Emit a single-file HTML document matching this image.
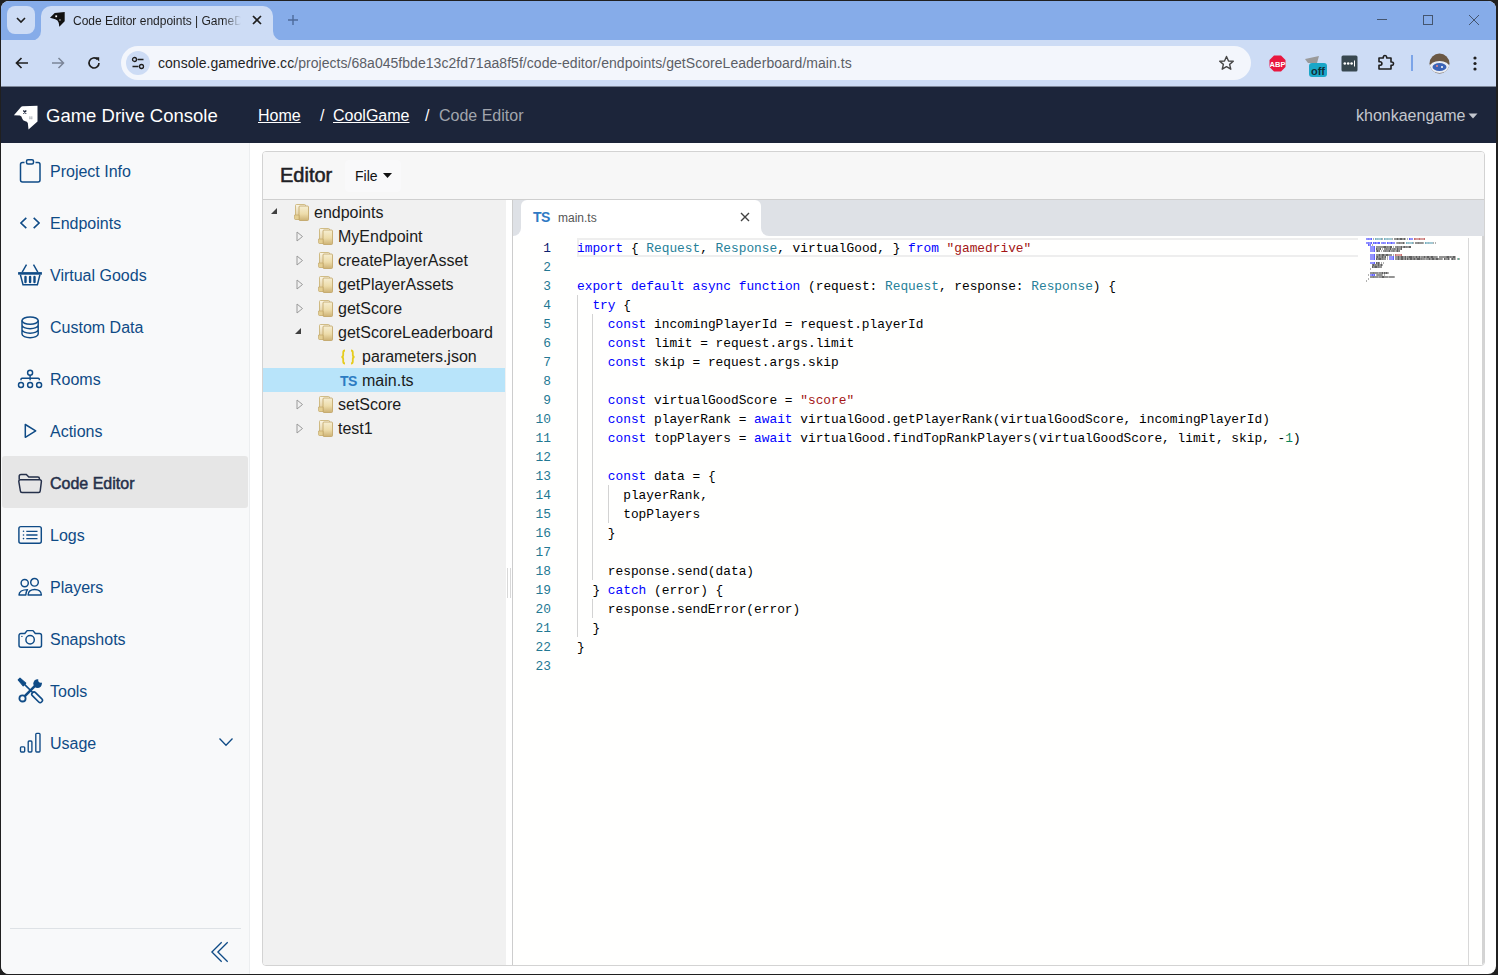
<!DOCTYPE html>
<html><head><meta charset="utf-8">
<style>
*{box-sizing:border-box;margin:0;padding:0}
html,body{width:1498px;height:975px;overflow:hidden;background:#202020;font-family:"Liberation Sans",sans-serif}
.abs{position:absolute}
#win{position:absolute;left:1px;top:1px;width:1495px;height:973px;background:#fff;border-radius:8px;overflow:hidden}
#root{position:absolute;left:-1px;top:-1px;width:1498px;height:975px}
/* chrome */
#tabstrip{position:absolute;left:0;top:0;width:1498px;height:40px;background:#86ace9}
#toolbar{position:absolute;left:0;top:40px;width:1498px;height:47px;background:#cddcf5;border-bottom:1px solid #7d8799}
#tabdd{position:absolute;left:7px;top:6px;width:28px;height:28px;border-radius:8px;background:#cddcf5}
#acttab{position:absolute;left:41px;top:6px;width:232px;height:35px;background:#cddcf5;border-radius:10px 10px 0 0}
#acttab:before,#acttab:after{content:"";position:absolute;bottom:0;width:10px;height:10px;background:transparent}
#acttab:before{left:-10px;border-bottom-right-radius:10px;box-shadow:4px 4px 0 4px #cddcf5}
#acttab:after{right:-10px;border-bottom-left-radius:10px;box-shadow:-4px 4px 0 4px #cddcf5}
#tabtitle{position:absolute;left:32px;top:8px;font-size:12px;color:#1f1f1f;white-space:nowrap;width:170px;overflow:hidden;
  -webkit-mask-image:linear-gradient(90deg,#000 150px,transparent 168px)}
#omni{position:absolute;left:121px;top:6px;width:1130px;height:34px;border-radius:17px;background:#f3f6fc}
#siteic{position:absolute;left:5px;top:5px;width:24px;height:24px;border-radius:12px;background:#cddcf5}
#url{position:absolute;left:37px;top:9px;font-size:14px;letter-spacing:0.04px;color:#5b5e66;white-space:nowrap}
#url b{font-weight:normal;color:#1f1f1f}
/* app nav */
#nav{position:absolute;left:0;top:87px;width:1498px;height:56px;background:#1c253a}
#brand{position:absolute;left:46px;top:18px;font-size:18.5px;color:#fff;white-space:nowrap}
.bc{position:absolute;top:20px;font-size:16px;color:#fff;white-space:nowrap}
.bc u{text-decoration:underline;text-underline-offset:1px}
#user{position:absolute;left:1356px;top:20px;font-size:16px;color:#c3c7ce;white-space:nowrap}
/* sidebar */
#side{position:absolute;left:0;top:143px;width:250px;height:832px;background:#f8f9fa;border-right:1px solid #eceef0}
.si{position:absolute;left:2px;width:246px;height:52px;border-radius:3px}
.si.act{background:#e6e6e6}
.si span{position:absolute;left:48px;top:18.5px;font-size:16px;color:#0f4b86;white-space:nowrap}
.si.act span{color:#25304a;-webkit-text-stroke:0.5px #25304a}
.si svg{position:absolute;left:14px;top:12px}
#sidesep{position:absolute;left:10px;top:785px;width:231px;height:1px;background:#dee2e6}
/* card */
#card{position:absolute;left:262px;top:151px;width:1223px;height:815px;border:1px solid #d3d3d3;border-radius:4px;background:#fff;overflow:hidden}
#chead{position:absolute;left:0;top:0;width:1221px;height:48px;background:#f7f7f7;border-bottom:1px solid #cfcfcf}
#ctitle{position:absolute;left:17px;top:12px;font-size:20px;font-weight:normal;color:#1e2125;-webkit-text-stroke:0.55px #1e2125}
#filebtn{position:absolute;left:82px;top:8px;width:56px;height:32px;border-radius:4px;background:#f9f9fa}
#filebtn span{position:absolute;left:10px;top:8px;font-size:14px;color:#111}
#tree{position:absolute;left:0;top:48px;width:243px;height:765px;background:#f1f1f1}
.tr{position:absolute;left:0;width:242px;height:24px}
.tr span{position:absolute;top:4px;font-size:16px;color:#1b1b1b;white-space:nowrap}
.tr.sel{background:#b8e4fa}
.tr svg{position:absolute}
#split{position:absolute;left:243px;top:48px;width:6px;height:765px;background:#fff}
#editor{position:absolute;left:249px;top:48px;width:972px;height:765px;background:#fffffe;border-left:1px solid #cdcdcd}
#etabs{position:absolute;left:0;top:0;width:971px;height:36px;background:#dee1e6}
#etab{position:absolute;left:8px;top:0;width:240px;height:36px;background:#fff;border-radius:6px 6px 0 0}
#etab:before,#etab:after{content:"";position:absolute;bottom:0;width:8px;height:8px;background:transparent}
#etab:before{left:-8px;border-bottom-right-radius:8px;box-shadow:3px 3px 0 3px #fff}
#etab:after{right:-8px;border-bottom-left-radius:8px;box-shadow:-3px 3px 0 3px #fff}
.code{font-family:"Liberation Mono",monospace;font-size:12.84px;line-height:19px;white-space:pre}
.ln{position:absolute;left:0;height:19px;color:#000}
.nm{position:absolute;right:0;height:19px;color:#237893;text-align:right}
b.kw{font-weight:normal;color:#0000ff}
b.ty{font-weight:normal;color:#267f99}
b.str{font-weight:normal;color:#a31515}
b.num{font-weight:normal;color:#098658}
</style></head><body>
<div id="win"><div id="root">
 <div id="tabstrip">
  <div id="tabdd"><svg class="abs" style="left:8px;top:10px" width="12" height="8" viewBox="0 0 12 8"><path d="M2 2 L6 6 L10 2" fill="none" stroke="#1f1f1f" stroke-width="1.6"/></svg></div>
  <div id="acttab">
   <svg class="abs" style="left:8px;top:5px" width="18" height="18" viewBox="0 0 18 18"><path d="M1 6.7 L5.7 2 L15.7 1 V10.3 L10.3 15.7 L9.7 11.7 Q9 9 6.3 8.3 Z" fill="#111"/><rect x="6.3" y="4.4" width="1.8" height="1.8" fill="#fff"/><rect x="10" y="8" width="1.9" height="1.9" fill="#6a6a6a"/></svg>
   <div id="tabtitle">Code Editor endpoints | GameDrive</div>
   <svg class="abs" style="left:211px;top:9px" width="10" height="10" viewBox="0 0 10 10"><path d="M1 1 L9 9 M9 1 L1 9" stroke="#1f1f1f" stroke-width="1.7"/></svg>
  </div>
  <svg class="abs" style="left:287px;top:14px" width="12" height="12" viewBox="0 0 12 12"><path d="M6 1 V11 M1 6 H11" stroke="#4d6a9a" stroke-width="1.4"/></svg>
  <svg class="abs" style="left:1376px;top:14px" width="12" height="12" viewBox="0 0 12 12"><path d="M1 5.5 H11" stroke="#44556f" stroke-width="1"/></svg>
  <svg class="abs" style="left:1422px;top:14px" width="12" height="12" viewBox="0 0 12 12"><rect x="1.5" y="1.5" width="9" height="9" fill="none" stroke="#44556f" stroke-width="1"/></svg>
  <svg class="abs" style="left:1468px;top:14px" width="12" height="12" viewBox="0 0 12 12"><path d="M1 1 L11 11 M11 1 L1 11" stroke="#44556f" stroke-width="1"/></svg>
 </div>
 <div id="toolbar">
  <svg class="abs" style="left:14px;top:15px" width="16" height="16" viewBox="0 0 16 16"><path d="M14 8 H2.5 M7.5 3 L2.5 8 L7.5 13" fill="none" stroke="#1f1f1f" stroke-width="1.7"/></svg>
  <svg class="abs" style="left:50px;top:15px" width="16" height="16" viewBox="0 0 16 16"><path d="M2 8 H13.5 M8.5 3 L13.5 8 L8.5 13" fill="none" stroke="#7b8598" stroke-width="1.5"/></svg>
  <svg class="abs" style="left:86px;top:15px" width="16" height="16" viewBox="0 0 16 16"><path d="M13 8 A5 5 0 1 1 11.4 4.3" fill="none" stroke="#1f1f1f" stroke-width="1.7"/><path d="M9 2.2 H13.2 V6.4 Z" fill="#1f1f1f"/></svg>
  <div id="omni">
   <div id="siteic"><svg class="abs" style="left:5px;top:5px" width="14" height="14" viewBox="0 0 14 14"><circle cx="3.5" cy="3.5" r="2" fill="none" stroke="#1f1f1f" stroke-width="1.3"/><path d="M6.5 3.5 H12.5 M1.5 10.5 H7.5" stroke="#1f1f1f" stroke-width="1.3"/><circle cx="10.5" cy="10.5" r="2" fill="none" stroke="#1f1f1f" stroke-width="1.3"/></svg></div>
   <div id="url"><b>console.gamedrive.cc</b>/projects/68a045fbde13c2fd71aa8f5f/code-editor/endpoints/getScoreLeaderboard/main.ts</div>
   <svg class="abs" style="left:1097px;top:9px" width="17" height="16" viewBox="0 0 17 16"><path d="M8.5 1.5 L10.5 6 L15.3 6.3 L11.6 9.4 L12.8 14.2 L8.5 11.6 L4.2 14.2 L5.4 9.4 L1.7 6.3 L6.5 6 Z" fill="none" stroke="#474747" stroke-width="1.4" stroke-linejoin="round"/></svg>
  </div>
  <svg class="abs" style="left:1269px;top:15px" width="17" height="17" viewBox="0 0 17 17"><path d="M5 0.5 H12 L16.5 5 V12 L12 16.5 H5 L0.5 12 V5 Z" fill="#e8173f"/><text x="8.5" y="11.6" font-size="7.5" font-weight="bold" fill="#fff" text-anchor="middle" font-family="Liberation Sans">ABP</text></svg>
  <svg class="abs" style="left:1304px;top:15px" width="24" height="23" viewBox="0 0 24 23"><path d="M1 4 L15 1 L13 8 L4 8 Z" fill="#9a9a9a"/><rect x="5" y="8" width="18" height="14" rx="3" fill="#1ba7c8"/><text x="14" y="19.5" font-size="11" font-weight="bold" fill="#10303a" text-anchor="middle" font-family="Liberation Sans">off</text></svg>
  <svg class="abs" style="left:1341px;top:15px" width="17" height="17" viewBox="0 0 17 17"><rect x="0.5" y="0.5" width="16" height="16" rx="1.5" fill="#37474f"/><circle cx="3.8" cy="8.5" r="1.3" fill="#fff"/><circle cx="7.2" cy="8.5" r="1.3" fill="#fff"/><circle cx="10.6" cy="8.5" r="1.3" fill="#fff"/><rect x="13" y="5.5" width="1" height="6" fill="#fff"/></svg>
  <svg class="abs" style="left:1377px;top:14px" width="18" height="17" viewBox="0 0 18 17"><path d="M2 4 H6.3 V3.2 A1.7 1.7 0 0 1 9.7 3.2 V4 H14 V8 H14.8 A1.7 1.7 0 0 1 14.8 11.4 H14 V15 H2 V11.2 H3.2 A1.7 1.7 0 0 0 3.2 7.8 H2 Z" fill="none" stroke="#1f1f1f" stroke-width="1.6" stroke-linejoin="round"/></svg>
  <div class="abs" style="left:1411px;top:15px;width:2px;height:16px;background:#7ba4e8"></div>
  <svg class="abs" style="left:1429px;top:13px" width="21" height="21" viewBox="0 0 21 21"><defs><clipPath id="av"><circle cx="10.5" cy="10.5" r="10"/></clipPath></defs><g clip-path="url(#av)"><rect width="21" height="21" fill="#6a5845"/><ellipse cx="10.5" cy="14" rx="10" ry="6" fill="#e8ecf4"/><ellipse cx="10.5" cy="14" rx="7" ry="4" fill="#3b63b6"/><circle cx="8" cy="13" r="1" fill="#e88"/><circle cx="13" cy="14" r="1" fill="#fff"/></g></svg>
  <svg class="abs" style="left:1472px;top:15px" width="6" height="17" viewBox="0 0 6 17"><circle cx="3" cy="3" r="1.6" fill="#1f1f1f"/><circle cx="3" cy="8.5" r="1.6" fill="#1f1f1f"/><circle cx="3" cy="14" r="1.6" fill="#1f1f1f"/></svg>
 </div>
 <div id="nav">
  <svg class="abs" style="left:12px;top:17px" width="28" height="28" viewBox="0 0 28 28"><path d="M1.9 11.3 L8.8 3.2 Q9.5 2.3 10.7 2.3 L25.5 1.7 V17.4 L16.5 25.5 L15.8 19 Q15 17.2 13.4 17.2 Q10.6 16.8 10.2 14.5 Q9.8 11.9 7.8 11.6 Z" fill="#fff"/><path d="M11.3 6.5 L14.3 9.5 M14.3 6.5 L11.3 9.5" stroke="#1c253a" stroke-width="1.4"/><path d="M17.8 12.2 V15.4 M19.8 12.2 V15.4 M17.2 13.2 H20.4 M17.2 14.6 H20.4" stroke="#9aa0aa" stroke-width="0.5"/></svg>
  <div id="brand">Game Drive Console</div>
  <div class="bc" style="left:258px"><u>Home</u></div>
  <div class="bc" style="left:320px">/</div>
  <div class="bc" style="left:333px"><u>CoolGame</u></div>
  <div class="bc" style="left:425px">/</div>
  <div class="bc" style="left:439px;color:#a1a5ad">Code Editor</div>
  <div id="user">khonkaengame</div>
  <svg class="abs" style="left:1468px;top:26px" width="10" height="6" viewBox="0 0 10 6"><path d="M0.5 0.5 H9.5 L5 5.5 Z" fill="#c3c7ce"/></svg>
 </div>
 <div id="side">
  <div class="si" style="top:1px"><svg width="28" height="30" viewBox="0 0 28 30"><path d="M8.5 6.5 H6.5 A2 2 0 0 0 4.5 8.5 V24 A2 2 0 0 0 6.5 26 H22 A2 2 0 0 0 24 24 V8.5 A2 2 0 0 0 22 6.5 H19.5" fill="none" stroke="#0f4b86" stroke-width="1.5"/><rect x="10.5" y="3.7" width="7" height="4.3" rx="1.5" fill="none" stroke="#0f4b86" stroke-width="1.5"/></svg><span>Project Info</span></div><div class="si" style="top:53px"><svg width="28" height="30" viewBox="0 0 28 30"><path d="M10.3 9.8 L4.9 15 L10.3 20.2 M17.7 9.8 L23.1 15 L17.7 20.2" fill="none" stroke="#0f4b86" stroke-width="1.6"/></svg><span>Endpoints</span></div><div class="si" style="top:105px"><svg width="28" height="30" viewBox="0 0 28 30"><path d="M10.5 4.7 L6.2 12.1 M17.5 4.7 L21.8 12.1" stroke="#0f4b86" stroke-width="1.45"/><rect x="2.1" y="12.1" width="23.8" height="2.6" fill="#0f4b86"/><path d="M4.4 14.7 L7 24.7 H21.4 L23.9 14.7" fill="none" stroke="#0f4b86" stroke-width="1.45"/><path d="M9.5 16.9 V22.1 M14.1 16.9 V22.1 M18.5 16.9 V22.1" stroke="#0f4b86" stroke-width="2.4" stroke-linecap="round"/></svg><span>Virtual Goods</span></div><div class="si" style="top:157px"><svg width="28" height="30" viewBox="0 0 28 30"><ellipse cx="14.1" cy="8.6" rx="8.1" ry="3.7" fill="none" stroke="#0f4b86" stroke-width="1.45"/><path d="M6 8.6 V22 A8.1 3.7 0 0 0 22.2 22 V8.6 M6 13 A8.1 3.7 0 0 0 22.2 13 M6 17.5 A8.1 3.7 0 0 0 22.2 17.5" fill="none" stroke="#0f4b86" stroke-width="1.45"/></svg><span>Custom Data</span></div><div class="si" style="top:209px"><svg width="28" height="30" viewBox="0 0 28 30"><circle cx="14.1" cy="8.8" r="2.5" fill="none" stroke="#0f4b86" stroke-width="1.45"/><path d="M5 16.2 V15.2 A1 1 0 0 1 6 14.2 H22.3 A1 1 0 0 1 23.3 15.2 V16.2 M14.1 11.3 V16.2" fill="none" stroke="#0f4b86" stroke-width="1.45"/><circle cx="5" cy="21" r="2.5" fill="none" stroke="#0f4b86" stroke-width="1.45"/><circle cx="14.1" cy="21" r="2.5" fill="none" stroke="#0f4b86" stroke-width="1.45"/><circle cx="23.1" cy="21" r="2.5" fill="none" stroke="#0f4b86" stroke-width="1.45"/></svg><span>Rooms</span></div><div class="si" style="top:261px"><svg width="28" height="30" viewBox="0 0 28 30"><path d="M9.3 8.5 V21.3 L19.7 14.9 Z" fill="none" stroke="#0f4b86" stroke-width="1.5" stroke-linejoin="round"/></svg><span>Actions</span></div><div class="si act" style="top:313px"><svg width="28" height="30" viewBox="0 0 28 30"><path d="M3.2 11.8 V8.3 A1.8 1.8 0 0 1 5 6.5 H10.3 L12.8 9 H21.8 A1.6 1.6 0 0 1 23.4 10.6 V11.8" fill="none" stroke="#25304a" stroke-width="1.5"/><path d="M2.8 13.5 A1.6 1.6 0 0 1 4.4 11.8 H23.8 A1.6 1.6 0 0 1 25.4 13.5 L24.2 23 A1.6 1.6 0 0 1 22.6 24.5 H6 A1.6 1.6 0 0 1 4.4 23 Z" fill="none" stroke="#25304a" stroke-width="1.5"/></svg><span>Code Editor</span></div><div class="si" style="top:365px"><svg width="28" height="30" viewBox="0 0 28 30"><rect x="2.9" y="6.6" width="22.4" height="16.6" rx="2" fill="none" stroke="#0f4b86" stroke-width="1.45"/><circle cx="7.5" cy="11.3" r="0.8" fill="#0f4b86"/><circle cx="7.5" cy="15" r="0.8" fill="#0f4b86"/><circle cx="7.5" cy="18.6" r="0.8" fill="#0f4b86"/><path d="M10.3 11.3 H21.5 M10.3 15 H21.5 M10.3 18.6 H21.5" stroke="#0f4b86" stroke-width="1.35"/></svg><span>Logs</span></div><div class="si" style="top:417px"><svg width="28" height="30" viewBox="0 0 28 30"><circle cx="8.7" cy="11.1" r="3.6" fill="none" stroke="#0f4b86" stroke-width="1.45"/><circle cx="18.5" cy="10.3" r="3.8" fill="none" stroke="#0f4b86" stroke-width="1.45"/><path d="M12.1 23 C12.1 19.6 14.8 17.4 18.7 17.4 C22.6 17.4 25.4 19.6 25.4 23 Z" fill="none" stroke="#0f4b86" stroke-width="1.45" stroke-linejoin="round"/><path d="M11.5 17.6 C6.2 17.6 3 20 3 23 H9.8 C9.8 21 10.3 19.2 11.5 17.6 Z" fill="none" stroke="#0f4b86" stroke-width="1.45" stroke-linejoin="round"/></svg><span>Players</span></div><div class="si" style="top:469px"><svg width="28" height="30" viewBox="0 0 28 30"><path d="M3 11.5 A2 2 0 0 1 5 9.5 H8.8 L11.1 6.6 H17 L19.3 9.5 H23.5 A2 2 0 0 1 25.5 11.5 V21.3 A2 2 0 0 1 23.5 23.3 H5 A2 2 0 0 1 3 21.3 Z" fill="none" stroke="#0f4b86" stroke-width="1.45" stroke-linejoin="round"/><circle cx="14.1" cy="15.7" r="4.2" fill="none" stroke="#0f4b86" stroke-width="1.45"/><circle cx="5.9" cy="12.4" r="0.7" fill="#0f4b86"/></svg><span>Snapshots</span></div><div class="si" style="top:521px"><svg width="28" height="30" viewBox="0 0 28 30"><path d="M2.2 4 L4 2.2 L9.8 7.2 L7.2 9.8 Z" fill="#0f4b86" stroke="#0f4b86" stroke-width="1.1" stroke-linejoin="round"/><path d="M8.5 8.3 L17.2 17" stroke="#0f4b86" stroke-width="1.7"/><g transform="rotate(45 21.1 21.3)"><rect x="14.6" y="19.1" width="13" height="4.4" rx="2" fill="none" stroke="#0f4b86" stroke-width="1.6"/></g><circle cx="6.5" cy="22.4" r="3.1" fill="none" stroke="#0f4b86" stroke-width="1.8"/><path d="M8.8 20.1 L19 9.9" stroke="#0f4b86" stroke-width="2.5"/><circle cx="21.6" cy="7.6" r="4.3" fill="#0f4b86"/><circle cx="24.8" cy="4.1" r="2.6" fill="#f8f9fa"/></svg><span>Tools</span></div><div class="si" style="top:573px"><svg width="28" height="30" viewBox="0 0 28 30"><rect x="4.5" y="18.8" width="4.2" height="5.2" rx="0.9" fill="none" stroke="#0f4b86" stroke-width="1.35"/><rect x="12.2" y="13" width="3.7" height="11" rx="0.9" fill="none" stroke="#0f4b86" stroke-width="1.35"/><rect x="19.8" y="5.3" width="4.2" height="18.7" rx="0.9" fill="none" stroke="#0f4b86" stroke-width="1.35"/></svg><span>Usage</span><svg style="left:216px;top:21px" width="16" height="10" viewBox="0 0 16 10"><path d="M1.5 1.5 L8 8.2 L14.5 1.5" fill="none" stroke="#0f4b86" stroke-width="1.3"/></svg></div>
  <div id="sidesep"></div>
  <svg class="abs" style="left:210px;top:797px" width="20" height="24" viewBox="0 0 20 24"><path d="M11.7 2.2 L1.9 12 L11.7 21.8 M17.7 2.2 L7.9 12 L17.7 21.8" fill="none" stroke="#0f4b86" stroke-width="1.3"/></svg>
 </div>
 <div id="card">
  <div id="chead">
   <div id="ctitle">Editor</div>
   <div id="filebtn"><span>File</span><svg class="abs" style="left:38px;top:13px" width="9" height="5" viewBox="0 0 9 5"><path d="M0 0 H9 L4.5 5 Z" fill="#111"/></svg></div>
  </div>
  <div id="tree"><div class="tr" style="top:0px"><svg style="left:7px;top:7px" width="8" height="8" viewBox="0 0 8 8"><path d="M7 1 V7 H1 Z" fill="#404040"/></svg><svg style="left:31px;top:4px" width="16" height="17" viewBox="0 0 16 17"><defs><linearGradient id="fg" x1="0" y1="0" x2="0" y2="1"><stop offset="0" stop-color="#f6eed2"/><stop offset="0.55" stop-color="#eddcaa"/><stop offset="1" stop-color="#cdb274"/></linearGradient><linearGradient id="fb" x1="0" y1="0" x2="0" y2="1"><stop offset="0" stop-color="#fbf6e6"/><stop offset="1" stop-color="#dcc58b"/></linearGradient></defs><path d="M1.5 1.5 Q1.5 0.5 2.5 0.5 H10.5 Q11.5 0.5 11.5 1.5 V15 H1.5 Z" fill="url(#fb)" stroke="#c7ad6c" stroke-width="0.8"/><path d="M5 3 Q5 2 6 2 H13.5 Q14.5 2 14.5 3 V15.5 Q14.5 16.5 13.5 16.5 H6 Q5 16.5 5 15.5 Z" fill="url(#fg)" stroke="#bfa262" stroke-width="0.8"/><path d="M0.5 11 H5 V15.5 H1.5 Q0.5 15.5 0.5 14.5 Z" fill="#e4cf93" stroke="#bfa262" stroke-width="0.6"/></svg><span style="left:51px">endpoints</span></div><div class="tr" style="top:24px"><svg style="left:33px;top:7px" width="8" height="11" viewBox="0 0 8 11"><path d="M1 1 L6.5 5.5 L1 10 Z" fill="none" stroke="#9a9a9a" stroke-width="1"/></svg><svg style="left:55px;top:4px" width="16" height="17" viewBox="0 0 16 17"><defs><linearGradient id="fg" x1="0" y1="0" x2="0" y2="1"><stop offset="0" stop-color="#f6eed2"/><stop offset="0.55" stop-color="#eddcaa"/><stop offset="1" stop-color="#cdb274"/></linearGradient><linearGradient id="fb" x1="0" y1="0" x2="0" y2="1"><stop offset="0" stop-color="#fbf6e6"/><stop offset="1" stop-color="#dcc58b"/></linearGradient></defs><path d="M1.5 1.5 Q1.5 0.5 2.5 0.5 H10.5 Q11.5 0.5 11.5 1.5 V15 H1.5 Z" fill="url(#fb)" stroke="#c7ad6c" stroke-width="0.8"/><path d="M5 3 Q5 2 6 2 H13.5 Q14.5 2 14.5 3 V15.5 Q14.5 16.5 13.5 16.5 H6 Q5 16.5 5 15.5 Z" fill="url(#fg)" stroke="#bfa262" stroke-width="0.8"/><path d="M0.5 11 H5 V15.5 H1.5 Q0.5 15.5 0.5 14.5 Z" fill="#e4cf93" stroke="#bfa262" stroke-width="0.6"/></svg><span style="left:75px">MyEndpoint</span></div><div class="tr" style="top:48px"><svg style="left:33px;top:7px" width="8" height="11" viewBox="0 0 8 11"><path d="M1 1 L6.5 5.5 L1 10 Z" fill="none" stroke="#9a9a9a" stroke-width="1"/></svg><svg style="left:55px;top:4px" width="16" height="17" viewBox="0 0 16 17"><defs><linearGradient id="fg" x1="0" y1="0" x2="0" y2="1"><stop offset="0" stop-color="#f6eed2"/><stop offset="0.55" stop-color="#eddcaa"/><stop offset="1" stop-color="#cdb274"/></linearGradient><linearGradient id="fb" x1="0" y1="0" x2="0" y2="1"><stop offset="0" stop-color="#fbf6e6"/><stop offset="1" stop-color="#dcc58b"/></linearGradient></defs><path d="M1.5 1.5 Q1.5 0.5 2.5 0.5 H10.5 Q11.5 0.5 11.5 1.5 V15 H1.5 Z" fill="url(#fb)" stroke="#c7ad6c" stroke-width="0.8"/><path d="M5 3 Q5 2 6 2 H13.5 Q14.5 2 14.5 3 V15.5 Q14.5 16.5 13.5 16.5 H6 Q5 16.5 5 15.5 Z" fill="url(#fg)" stroke="#bfa262" stroke-width="0.8"/><path d="M0.5 11 H5 V15.5 H1.5 Q0.5 15.5 0.5 14.5 Z" fill="#e4cf93" stroke="#bfa262" stroke-width="0.6"/></svg><span style="left:75px">createPlayerAsset</span></div><div class="tr" style="top:72px"><svg style="left:33px;top:7px" width="8" height="11" viewBox="0 0 8 11"><path d="M1 1 L6.5 5.5 L1 10 Z" fill="none" stroke="#9a9a9a" stroke-width="1"/></svg><svg style="left:55px;top:4px" width="16" height="17" viewBox="0 0 16 17"><defs><linearGradient id="fg" x1="0" y1="0" x2="0" y2="1"><stop offset="0" stop-color="#f6eed2"/><stop offset="0.55" stop-color="#eddcaa"/><stop offset="1" stop-color="#cdb274"/></linearGradient><linearGradient id="fb" x1="0" y1="0" x2="0" y2="1"><stop offset="0" stop-color="#fbf6e6"/><stop offset="1" stop-color="#dcc58b"/></linearGradient></defs><path d="M1.5 1.5 Q1.5 0.5 2.5 0.5 H10.5 Q11.5 0.5 11.5 1.5 V15 H1.5 Z" fill="url(#fb)" stroke="#c7ad6c" stroke-width="0.8"/><path d="M5 3 Q5 2 6 2 H13.5 Q14.5 2 14.5 3 V15.5 Q14.5 16.5 13.5 16.5 H6 Q5 16.5 5 15.5 Z" fill="url(#fg)" stroke="#bfa262" stroke-width="0.8"/><path d="M0.5 11 H5 V15.5 H1.5 Q0.5 15.5 0.5 14.5 Z" fill="#e4cf93" stroke="#bfa262" stroke-width="0.6"/></svg><span style="left:75px">getPlayerAssets</span></div><div class="tr" style="top:96px"><svg style="left:33px;top:7px" width="8" height="11" viewBox="0 0 8 11"><path d="M1 1 L6.5 5.5 L1 10 Z" fill="none" stroke="#9a9a9a" stroke-width="1"/></svg><svg style="left:55px;top:4px" width="16" height="17" viewBox="0 0 16 17"><defs><linearGradient id="fg" x1="0" y1="0" x2="0" y2="1"><stop offset="0" stop-color="#f6eed2"/><stop offset="0.55" stop-color="#eddcaa"/><stop offset="1" stop-color="#cdb274"/></linearGradient><linearGradient id="fb" x1="0" y1="0" x2="0" y2="1"><stop offset="0" stop-color="#fbf6e6"/><stop offset="1" stop-color="#dcc58b"/></linearGradient></defs><path d="M1.5 1.5 Q1.5 0.5 2.5 0.5 H10.5 Q11.5 0.5 11.5 1.5 V15 H1.5 Z" fill="url(#fb)" stroke="#c7ad6c" stroke-width="0.8"/><path d="M5 3 Q5 2 6 2 H13.5 Q14.5 2 14.5 3 V15.5 Q14.5 16.5 13.5 16.5 H6 Q5 16.5 5 15.5 Z" fill="url(#fg)" stroke="#bfa262" stroke-width="0.8"/><path d="M0.5 11 H5 V15.5 H1.5 Q0.5 15.5 0.5 14.5 Z" fill="#e4cf93" stroke="#bfa262" stroke-width="0.6"/></svg><span style="left:75px">getScore</span></div><div class="tr" style="top:120px"><svg style="left:31px;top:7px" width="8" height="8" viewBox="0 0 8 8"><path d="M7 1 V7 H1 Z" fill="#404040"/></svg><svg style="left:55px;top:4px" width="16" height="17" viewBox="0 0 16 17"><defs><linearGradient id="fg" x1="0" y1="0" x2="0" y2="1"><stop offset="0" stop-color="#f6eed2"/><stop offset="0.55" stop-color="#eddcaa"/><stop offset="1" stop-color="#cdb274"/></linearGradient><linearGradient id="fb" x1="0" y1="0" x2="0" y2="1"><stop offset="0" stop-color="#fbf6e6"/><stop offset="1" stop-color="#dcc58b"/></linearGradient></defs><path d="M1.5 1.5 Q1.5 0.5 2.5 0.5 H10.5 Q11.5 0.5 11.5 1.5 V15 H1.5 Z" fill="url(#fb)" stroke="#c7ad6c" stroke-width="0.8"/><path d="M5 3 Q5 2 6 2 H13.5 Q14.5 2 14.5 3 V15.5 Q14.5 16.5 13.5 16.5 H6 Q5 16.5 5 15.5 Z" fill="url(#fg)" stroke="#bfa262" stroke-width="0.8"/><path d="M0.5 11 H5 V15.5 H1.5 Q0.5 15.5 0.5 14.5 Z" fill="#e4cf93" stroke="#bfa262" stroke-width="0.6"/></svg><span style="left:75px">getScoreLeaderboard</span></div><div class="tr" style="top:144px"><svg style="left:77px;top:5px" width="16" height="16" viewBox="0 0 16 16"><path d="M5 1.5 C3.3 1.5 3.2 2.3 3.2 3.8 V6 C3.2 7.2 2.7 7.9 1.5 8 C2.7 8.1 3.2 8.8 3.2 10 V12.2 C3.2 13.7 3.3 14.5 5 14.5 M11 1.5 C12.7 1.5 12.8 2.3 12.8 3.8 V6 C12.8 7.2 13.3 7.9 14.5 8 C13.3 8.1 12.8 8.8 12.8 10 V12.2 C12.8 13.7 12.7 14.5 11 14.5" fill="none" stroke="#e5cc1e" stroke-width="1.8"/></svg><span style="left:99px">parameters.json</span></div><div class="tr sel" style="top:168px"><span style="left:77px;top:5px;font-size:14px;font-weight:bold;color:#2c7bc2;letter-spacing:-0.5px">TS</span><span style="left:99px">main.ts</span></div><div class="tr" style="top:192px"><svg style="left:33px;top:7px" width="8" height="11" viewBox="0 0 8 11"><path d="M1 1 L6.5 5.5 L1 10 Z" fill="none" stroke="#9a9a9a" stroke-width="1"/></svg><svg style="left:55px;top:4px" width="16" height="17" viewBox="0 0 16 17"><defs><linearGradient id="fg" x1="0" y1="0" x2="0" y2="1"><stop offset="0" stop-color="#f6eed2"/><stop offset="0.55" stop-color="#eddcaa"/><stop offset="1" stop-color="#cdb274"/></linearGradient><linearGradient id="fb" x1="0" y1="0" x2="0" y2="1"><stop offset="0" stop-color="#fbf6e6"/><stop offset="1" stop-color="#dcc58b"/></linearGradient></defs><path d="M1.5 1.5 Q1.5 0.5 2.5 0.5 H10.5 Q11.5 0.5 11.5 1.5 V15 H1.5 Z" fill="url(#fb)" stroke="#c7ad6c" stroke-width="0.8"/><path d="M5 3 Q5 2 6 2 H13.5 Q14.5 2 14.5 3 V15.5 Q14.5 16.5 13.5 16.5 H6 Q5 16.5 5 15.5 Z" fill="url(#fg)" stroke="#bfa262" stroke-width="0.8"/><path d="M0.5 11 H5 V15.5 H1.5 Q0.5 15.5 0.5 14.5 Z" fill="#e4cf93" stroke="#bfa262" stroke-width="0.6"/></svg><span style="left:75px">setScore</span></div><div class="tr" style="top:216px"><svg style="left:33px;top:7px" width="8" height="11" viewBox="0 0 8 11"><path d="M1 1 L6.5 5.5 L1 10 Z" fill="none" stroke="#9a9a9a" stroke-width="1"/></svg><svg style="left:55px;top:4px" width="16" height="17" viewBox="0 0 16 17"><defs><linearGradient id="fg" x1="0" y1="0" x2="0" y2="1"><stop offset="0" stop-color="#f6eed2"/><stop offset="0.55" stop-color="#eddcaa"/><stop offset="1" stop-color="#cdb274"/></linearGradient><linearGradient id="fb" x1="0" y1="0" x2="0" y2="1"><stop offset="0" stop-color="#fbf6e6"/><stop offset="1" stop-color="#dcc58b"/></linearGradient></defs><path d="M1.5 1.5 Q1.5 0.5 2.5 0.5 H10.5 Q11.5 0.5 11.5 1.5 V15 H1.5 Z" fill="url(#fb)" stroke="#c7ad6c" stroke-width="0.8"/><path d="M5 3 Q5 2 6 2 H13.5 Q14.5 2 14.5 3 V15.5 Q14.5 16.5 13.5 16.5 H6 Q5 16.5 5 15.5 Z" fill="url(#fg)" stroke="#bfa262" stroke-width="0.8"/><path d="M0.5 11 H5 V15.5 H1.5 Q0.5 15.5 0.5 14.5 Z" fill="#e4cf93" stroke="#bfa262" stroke-width="0.6"/></svg><span style="left:75px">test1</span></div></div>
  <div id="split"><div class="abs" style="left:1px;top:368px;width:1px;height:30px;background:#d8d8d8"></div><div class="abs" style="left:4px;top:368px;width:1px;height:30px;background:#d8d8d8"></div></div>
  <div id="editor">
   <div id="etabs">
    <div id="etab">
     <div class="abs" style="left:12px;top:9px;font-size:14px;font-weight:bold;color:#2f7ac4;letter-spacing:-0.5px">TS</div>
     <div class="abs" style="left:37px;top:11px;font-size:12px;color:#555">main.ts</div>
     <svg class="abs" style="left:219px;top:12px" width="10" height="10" viewBox="0 0 10 10"><path d="M1 1 L9 9 M9 1 L1 9" stroke="#424242" stroke-width="1.4"/></svg>
    </div>
   </div>
   <div class="abs" style="left:0;top:36px;width:971px;height:729px;background:#fffffe">
    <div class="abs code" style="left:0;top:3px;width:38px;height:500px"><div class="nm" style="top:0px;color:#0b216f">1</div><div class="nm" style="top:19px">2</div><div class="nm" style="top:38px">3</div><div class="nm" style="top:57px">4</div><div class="nm" style="top:76px">5</div><div class="nm" style="top:95px">6</div><div class="nm" style="top:114px">7</div><div class="nm" style="top:133px">8</div><div class="nm" style="top:152px">9</div><div class="nm" style="top:171px">10</div><div class="nm" style="top:190px">11</div><div class="nm" style="top:209px">12</div><div class="nm" style="top:228px">13</div><div class="nm" style="top:247px">14</div><div class="nm" style="top:266px">15</div><div class="nm" style="top:285px">16</div><div class="nm" style="top:304px">17</div><div class="nm" style="top:323px">18</div><div class="nm" style="top:342px">19</div><div class="nm" style="top:361px">20</div><div class="nm" style="top:380px">21</div><div class="nm" style="top:399px">22</div><div class="nm" style="top:418px">23</div></div>
    <div class="abs" style="left:64px;top:2px;width:781px;height:19px;border:2px solid #eeeeee;border-right:0"></div>
    <div class="abs" style="left:64px;top:59px;width:1px;height:342px;background:#d3d3d3"></div>
    <div class="abs" style="left:79px;top:78px;width:1px;height:266px;background:#d3d3d3"></div>
    <div class="abs" style="left:79px;top:363px;width:1px;height:19px;background:#d3d3d3"></div>
    <div class="abs" style="left:95px;top:249px;width:1px;height:38px;background:#d3d3d3"></div>
    <div class="abs code" style="left:64px;top:3px;width:800px;height:500px"><div class="ln" style="top:0px"><b class="kw">import</b> { <b class="ty">Request</b>, <b class="ty">Response</b>, virtualGood, } <b class="kw">from</b> <b class="str">&quot;gamedrive&quot;</b></div><div class="ln" style="top:19px"></div><div class="ln" style="top:38px"><b class="kw">export</b> <b class="kw">default</b> <b class="kw">async</b> <b class="kw">function</b> (request: <b class="ty">Request</b>, response: <b class="ty">Response</b>) {</div><div class="ln" style="top:57px">  <b class="kw">try</b> {</div><div class="ln" style="top:76px">    <b class="kw">const</b> incomingPlayerId = request.playerId</div><div class="ln" style="top:95px">    <b class="kw">const</b> limit = request.args.limit</div><div class="ln" style="top:114px">    <b class="kw">const</b> skip = request.args.skip</div><div class="ln" style="top:133px"></div><div class="ln" style="top:152px">    <b class="kw">const</b> virtualGoodScore = <b class="str">&quot;score&quot;</b></div><div class="ln" style="top:171px">    <b class="kw">const</b> playerRank = <b class="kw">await</b> virtualGood.getPlayerRank(virtualGoodScore, incomingPlayerId)</div><div class="ln" style="top:190px">    <b class="kw">const</b> topPlayers = <b class="kw">await</b> virtualGood.findTopRankPlayers(virtualGoodScore, limit, skip, -<b class="num">1</b>)</div><div class="ln" style="top:209px"></div><div class="ln" style="top:228px">    <b class="kw">const</b> data = {</div><div class="ln" style="top:247px">      playerRank,</div><div class="ln" style="top:266px">      topPlayers</div><div class="ln" style="top:285px">    }</div><div class="ln" style="top:304px"></div><div class="ln" style="top:323px">    response.send(data)</div><div class="ln" style="top:342px">  } <b class="kw">catch</b> (error) {</div><div class="ln" style="top:361px">    response.sendError(error)</div><div class="ln" style="top:380px">  }</div><div class="ln" style="top:399px">}</div><div class="ln" style="top:418px"></div></div>
    <svg class="abs" style="left:853px;top:2px" width="100" height="50" viewBox="0 0 100 50" shape-rendering="crispEdges"><rect x="0" y="0" width="1" height="2" fill="#0000ff" fill-opacity="0.42"/><rect x="1" y="0" width="1" height="2" fill="#0000ff" fill-opacity="0.42"/><rect x="2" y="0" width="1" height="2" fill="#0000ff" fill-opacity="0.5"/><rect x="3" y="0" width="1" height="2" fill="#0000ff" fill-opacity="0.42"/><rect x="4" y="0" width="1" height="2" fill="#0000ff" fill-opacity="0.42"/><rect x="5" y="0" width="1" height="2" fill="#0000ff" fill-opacity="0.62"/><rect x="7" y="0" width="1" height="2" fill="#000000" fill-opacity="0.3"/><rect x="9" y="0" width="1" height="2" fill="#267f99" fill-opacity="0.62"/><rect x="10" y="0" width="1" height="2" fill="#267f99" fill-opacity="0.42"/><rect x="11" y="0" width="1" height="2" fill="#267f99" fill-opacity="0.5"/><rect x="12" y="0" width="1" height="2" fill="#267f99" fill-opacity="0.42"/><rect x="13" y="0" width="1" height="2" fill="#267f99" fill-opacity="0.42"/><rect x="14" y="0" width="1" height="2" fill="#267f99" fill-opacity="0.42"/><rect x="15" y="0" width="1" height="2" fill="#267f99" fill-opacity="0.62"/><rect x="16" y="0" width="1" height="2" fill="#000000" fill-opacity="0.3"/><rect x="18" y="0" width="1" height="2" fill="#267f99" fill-opacity="0.62"/><rect x="19" y="0" width="1" height="2" fill="#267f99" fill-opacity="0.42"/><rect x="20" y="0" width="1" height="2" fill="#267f99" fill-opacity="0.42"/><rect x="21" y="0" width="1" height="2" fill="#267f99" fill-opacity="0.5"/><rect x="22" y="0" width="1" height="2" fill="#267f99" fill-opacity="0.42"/><rect x="23" y="0" width="1" height="2" fill="#267f99" fill-opacity="0.42"/><rect x="24" y="0" width="1" height="2" fill="#267f99" fill-opacity="0.42"/><rect x="25" y="0" width="1" height="2" fill="#267f99" fill-opacity="0.42"/><rect x="26" y="0" width="1" height="2" fill="#000000" fill-opacity="0.3"/><rect x="28" y="0" width="1" height="2" fill="#000000" fill-opacity="0.42"/><rect x="29" y="0" width="1" height="2" fill="#000000" fill-opacity="0.42"/><rect x="30" y="0" width="1" height="2" fill="#000000" fill-opacity="0.42"/><rect x="31" y="0" width="1" height="2" fill="#000000" fill-opacity="0.62"/><rect x="32" y="0" width="1" height="2" fill="#000000" fill-opacity="0.42"/><rect x="33" y="0" width="1" height="2" fill="#000000" fill-opacity="0.42"/><rect x="34" y="0" width="1" height="2" fill="#000000" fill-opacity="0.62"/><rect x="35" y="0" width="1" height="2" fill="#000000" fill-opacity="0.62"/><rect x="36" y="0" width="1" height="2" fill="#000000" fill-opacity="0.42"/><rect x="37" y="0" width="1" height="2" fill="#000000" fill-opacity="0.42"/><rect x="38" y="0" width="1" height="2" fill="#000000" fill-opacity="0.62"/><rect x="39" y="0" width="1" height="2" fill="#000000" fill-opacity="0.3"/><rect x="41" y="0" width="1" height="2" fill="#000000" fill-opacity="0.3"/><rect x="43" y="0" width="1" height="2" fill="#0000ff" fill-opacity="0.62"/><rect x="44" y="0" width="1" height="2" fill="#0000ff" fill-opacity="0.42"/><rect x="45" y="0" width="1" height="2" fill="#0000ff" fill-opacity="0.42"/><rect x="46" y="0" width="1" height="2" fill="#0000ff" fill-opacity="0.42"/><rect x="48" y="0" width="1" height="2" fill="#a31515" fill-opacity="0.62"/><rect x="49" y="0" width="1" height="2" fill="#a31515" fill-opacity="0.5"/><rect x="50" y="0" width="1" height="2" fill="#a31515" fill-opacity="0.42"/><rect x="51" y="0" width="1" height="2" fill="#a31515" fill-opacity="0.42"/><rect x="52" y="0" width="1" height="2" fill="#a31515" fill-opacity="0.42"/><rect x="53" y="0" width="1" height="2" fill="#a31515" fill-opacity="0.62"/><rect x="54" y="0" width="1" height="2" fill="#a31515" fill-opacity="0.42"/><rect x="55" y="0" width="1" height="2" fill="#a31515" fill-opacity="0.42"/><rect x="56" y="0" width="1" height="2" fill="#a31515" fill-opacity="0.42"/><rect x="57" y="0" width="1" height="2" fill="#a31515" fill-opacity="0.42"/><rect x="58" y="0" width="1" height="2" fill="#a31515" fill-opacity="0.62"/><rect x="0" y="4" width="1" height="2" fill="#0000ff" fill-opacity="0.42"/><rect x="1" y="4" width="1" height="2" fill="#0000ff" fill-opacity="0.42"/><rect x="2" y="4" width="1" height="2" fill="#0000ff" fill-opacity="0.5"/><rect x="3" y="4" width="1" height="2" fill="#0000ff" fill-opacity="0.42"/><rect x="4" y="4" width="1" height="2" fill="#0000ff" fill-opacity="0.42"/><rect x="5" y="4" width="1" height="2" fill="#0000ff" fill-opacity="0.62"/><rect x="7" y="4" width="1" height="2" fill="#0000ff" fill-opacity="0.62"/><rect x="8" y="4" width="1" height="2" fill="#0000ff" fill-opacity="0.42"/><rect x="9" y="4" width="1" height="2" fill="#0000ff" fill-opacity="0.62"/><rect x="10" y="4" width="1" height="2" fill="#0000ff" fill-opacity="0.42"/><rect x="11" y="4" width="1" height="2" fill="#0000ff" fill-opacity="0.42"/><rect x="12" y="4" width="1" height="2" fill="#0000ff" fill-opacity="0.62"/><rect x="13" y="4" width="1" height="2" fill="#0000ff" fill-opacity="0.62"/><rect x="15" y="4" width="1" height="2" fill="#0000ff" fill-opacity="0.42"/><rect x="16" y="4" width="1" height="2" fill="#0000ff" fill-opacity="0.42"/><rect x="17" y="4" width="1" height="2" fill="#0000ff" fill-opacity="0.5"/><rect x="18" y="4" width="1" height="2" fill="#0000ff" fill-opacity="0.42"/><rect x="19" y="4" width="1" height="2" fill="#0000ff" fill-opacity="0.42"/><rect x="21" y="4" width="1" height="2" fill="#0000ff" fill-opacity="0.62"/><rect x="22" y="4" width="1" height="2" fill="#0000ff" fill-opacity="0.42"/><rect x="23" y="4" width="1" height="2" fill="#0000ff" fill-opacity="0.42"/><rect x="24" y="4" width="1" height="2" fill="#0000ff" fill-opacity="0.42"/><rect x="25" y="4" width="1" height="2" fill="#0000ff" fill-opacity="0.62"/><rect x="26" y="4" width="1" height="2" fill="#0000ff" fill-opacity="0.42"/><rect x="27" y="4" width="1" height="2" fill="#0000ff" fill-opacity="0.42"/><rect x="28" y="4" width="1" height="2" fill="#0000ff" fill-opacity="0.42"/><rect x="30" y="4" width="1" height="2" fill="#000000" fill-opacity="0.3"/><rect x="31" y="4" width="1" height="2" fill="#000000" fill-opacity="0.42"/><rect x="32" y="4" width="1" height="2" fill="#000000" fill-opacity="0.42"/><rect x="33" y="4" width="1" height="2" fill="#000000" fill-opacity="0.5"/><rect x="34" y="4" width="1" height="2" fill="#000000" fill-opacity="0.42"/><rect x="35" y="4" width="1" height="2" fill="#000000" fill-opacity="0.42"/><rect x="36" y="4" width="1" height="2" fill="#000000" fill-opacity="0.42"/><rect x="37" y="4" width="1" height="2" fill="#000000" fill-opacity="0.62"/><rect x="38" y="4" width="1" height="2" fill="#000000" fill-opacity="0.3"/><rect x="40" y="4" width="1" height="2" fill="#267f99" fill-opacity="0.62"/><rect x="41" y="4" width="1" height="2" fill="#267f99" fill-opacity="0.42"/><rect x="42" y="4" width="1" height="2" fill="#267f99" fill-opacity="0.5"/><rect x="43" y="4" width="1" height="2" fill="#267f99" fill-opacity="0.42"/><rect x="44" y="4" width="1" height="2" fill="#267f99" fill-opacity="0.42"/><rect x="45" y="4" width="1" height="2" fill="#267f99" fill-opacity="0.42"/><rect x="46" y="4" width="1" height="2" fill="#267f99" fill-opacity="0.62"/><rect x="47" y="4" width="1" height="2" fill="#000000" fill-opacity="0.3"/><rect x="49" y="4" width="1" height="2" fill="#000000" fill-opacity="0.42"/><rect x="50" y="4" width="1" height="2" fill="#000000" fill-opacity="0.42"/><rect x="51" y="4" width="1" height="2" fill="#000000" fill-opacity="0.42"/><rect x="52" y="4" width="1" height="2" fill="#000000" fill-opacity="0.5"/><rect x="53" y="4" width="1" height="2" fill="#000000" fill-opacity="0.42"/><rect x="54" y="4" width="1" height="2" fill="#000000" fill-opacity="0.42"/><rect x="55" y="4" width="1" height="2" fill="#000000" fill-opacity="0.42"/><rect x="56" y="4" width="1" height="2" fill="#000000" fill-opacity="0.42"/><rect x="57" y="4" width="1" height="2" fill="#000000" fill-opacity="0.3"/><rect x="59" y="4" width="1" height="2" fill="#267f99" fill-opacity="0.62"/><rect x="60" y="4" width="1" height="2" fill="#267f99" fill-opacity="0.42"/><rect x="61" y="4" width="1" height="2" fill="#267f99" fill-opacity="0.42"/><rect x="62" y="4" width="1" height="2" fill="#267f99" fill-opacity="0.5"/><rect x="63" y="4" width="1" height="2" fill="#267f99" fill-opacity="0.42"/><rect x="64" y="4" width="1" height="2" fill="#267f99" fill-opacity="0.42"/><rect x="65" y="4" width="1" height="2" fill="#267f99" fill-opacity="0.42"/><rect x="66" y="4" width="1" height="2" fill="#267f99" fill-opacity="0.42"/><rect x="67" y="4" width="1" height="2" fill="#000000" fill-opacity="0.3"/><rect x="69" y="4" width="1" height="2" fill="#000000" fill-opacity="0.3"/><rect x="2" y="6" width="1" height="2" fill="#0000ff" fill-opacity="0.62"/><rect x="3" y="6" width="1" height="2" fill="#0000ff" fill-opacity="0.42"/><rect x="4" y="6" width="1" height="2" fill="#0000ff" fill-opacity="0.5"/><rect x="6" y="6" width="1" height="2" fill="#000000" fill-opacity="0.3"/><rect x="4" y="8" width="1" height="2" fill="#0000ff" fill-opacity="0.42"/><rect x="5" y="8" width="1" height="2" fill="#0000ff" fill-opacity="0.42"/><rect x="6" y="8" width="1" height="2" fill="#0000ff" fill-opacity="0.42"/><rect x="7" y="8" width="1" height="2" fill="#0000ff" fill-opacity="0.42"/><rect x="8" y="8" width="1" height="2" fill="#0000ff" fill-opacity="0.62"/><rect x="10" y="8" width="1" height="2" fill="#000000" fill-opacity="0.42"/><rect x="11" y="8" width="1" height="2" fill="#000000" fill-opacity="0.42"/><rect x="12" y="8" width="1" height="2" fill="#000000" fill-opacity="0.42"/><rect x="13" y="8" width="1" height="2" fill="#000000" fill-opacity="0.42"/><rect x="14" y="8" width="1" height="2" fill="#000000" fill-opacity="0.42"/><rect x="15" y="8" width="1" height="2" fill="#000000" fill-opacity="0.42"/><rect x="16" y="8" width="1" height="2" fill="#000000" fill-opacity="0.42"/><rect x="17" y="8" width="1" height="2" fill="#000000" fill-opacity="0.5"/><rect x="18" y="8" width="1" height="2" fill="#000000" fill-opacity="0.62"/><rect x="19" y="8" width="1" height="2" fill="#000000" fill-opacity="0.62"/><rect x="20" y="8" width="1" height="2" fill="#000000" fill-opacity="0.42"/><rect x="21" y="8" width="1" height="2" fill="#000000" fill-opacity="0.5"/><rect x="22" y="8" width="1" height="2" fill="#000000" fill-opacity="0.42"/><rect x="23" y="8" width="1" height="2" fill="#000000" fill-opacity="0.42"/><rect x="24" y="8" width="1" height="2" fill="#000000" fill-opacity="0.62"/><rect x="25" y="8" width="1" height="2" fill="#000000" fill-opacity="0.62"/><rect x="27" y="8" width="1" height="2" fill="#000000" fill-opacity="0.3"/><rect x="29" y="8" width="1" height="2" fill="#000000" fill-opacity="0.42"/><rect x="30" y="8" width="1" height="2" fill="#000000" fill-opacity="0.42"/><rect x="31" y="8" width="1" height="2" fill="#000000" fill-opacity="0.5"/><rect x="32" y="8" width="1" height="2" fill="#000000" fill-opacity="0.42"/><rect x="33" y="8" width="1" height="2" fill="#000000" fill-opacity="0.42"/><rect x="34" y="8" width="1" height="2" fill="#000000" fill-opacity="0.42"/><rect x="35" y="8" width="1" height="2" fill="#000000" fill-opacity="0.62"/><rect x="36" y="8" width="1" height="2" fill="#000000" fill-opacity="0.3"/><rect x="37" y="8" width="1" height="2" fill="#000000" fill-opacity="0.5"/><rect x="38" y="8" width="1" height="2" fill="#000000" fill-opacity="0.62"/><rect x="39" y="8" width="1" height="2" fill="#000000" fill-opacity="0.42"/><rect x="40" y="8" width="1" height="2" fill="#000000" fill-opacity="0.5"/><rect x="41" y="8" width="1" height="2" fill="#000000" fill-opacity="0.42"/><rect x="42" y="8" width="1" height="2" fill="#000000" fill-opacity="0.42"/><rect x="43" y="8" width="1" height="2" fill="#000000" fill-opacity="0.62"/><rect x="44" y="8" width="1" height="2" fill="#000000" fill-opacity="0.62"/><rect x="4" y="10" width="1" height="2" fill="#0000ff" fill-opacity="0.42"/><rect x="5" y="10" width="1" height="2" fill="#0000ff" fill-opacity="0.42"/><rect x="6" y="10" width="1" height="2" fill="#0000ff" fill-opacity="0.42"/><rect x="7" y="10" width="1" height="2" fill="#0000ff" fill-opacity="0.42"/><rect x="8" y="10" width="1" height="2" fill="#0000ff" fill-opacity="0.62"/><rect x="10" y="10" width="1" height="2" fill="#000000" fill-opacity="0.62"/><rect x="11" y="10" width="1" height="2" fill="#000000" fill-opacity="0.42"/><rect x="12" y="10" width="1" height="2" fill="#000000" fill-opacity="0.42"/><rect x="13" y="10" width="1" height="2" fill="#000000" fill-opacity="0.42"/><rect x="14" y="10" width="1" height="2" fill="#000000" fill-opacity="0.62"/><rect x="16" y="10" width="1" height="2" fill="#000000" fill-opacity="0.3"/><rect x="18" y="10" width="1" height="2" fill="#000000" fill-opacity="0.42"/><rect x="19" y="10" width="1" height="2" fill="#000000" fill-opacity="0.42"/><rect x="20" y="10" width="1" height="2" fill="#000000" fill-opacity="0.5"/><rect x="21" y="10" width="1" height="2" fill="#000000" fill-opacity="0.42"/><rect x="22" y="10" width="1" height="2" fill="#000000" fill-opacity="0.42"/><rect x="23" y="10" width="1" height="2" fill="#000000" fill-opacity="0.42"/><rect x="24" y="10" width="1" height="2" fill="#000000" fill-opacity="0.62"/><rect x="25" y="10" width="1" height="2" fill="#000000" fill-opacity="0.3"/><rect x="26" y="10" width="1" height="2" fill="#000000" fill-opacity="0.42"/><rect x="27" y="10" width="1" height="2" fill="#000000" fill-opacity="0.42"/><rect x="28" y="10" width="1" height="2" fill="#000000" fill-opacity="0.5"/><rect x="29" y="10" width="1" height="2" fill="#000000" fill-opacity="0.42"/><rect x="30" y="10" width="1" height="2" fill="#000000" fill-opacity="0.3"/><rect x="31" y="10" width="1" height="2" fill="#000000" fill-opacity="0.62"/><rect x="32" y="10" width="1" height="2" fill="#000000" fill-opacity="0.42"/><rect x="33" y="10" width="1" height="2" fill="#000000" fill-opacity="0.42"/><rect x="34" y="10" width="1" height="2" fill="#000000" fill-opacity="0.42"/><rect x="35" y="10" width="1" height="2" fill="#000000" fill-opacity="0.62"/><rect x="4" y="12" width="1" height="2" fill="#0000ff" fill-opacity="0.42"/><rect x="5" y="12" width="1" height="2" fill="#0000ff" fill-opacity="0.42"/><rect x="6" y="12" width="1" height="2" fill="#0000ff" fill-opacity="0.42"/><rect x="7" y="12" width="1" height="2" fill="#0000ff" fill-opacity="0.42"/><rect x="8" y="12" width="1" height="2" fill="#0000ff" fill-opacity="0.62"/><rect x="10" y="12" width="1" height="2" fill="#000000" fill-opacity="0.42"/><rect x="11" y="12" width="1" height="2" fill="#000000" fill-opacity="0.62"/><rect x="12" y="12" width="1" height="2" fill="#000000" fill-opacity="0.42"/><rect x="13" y="12" width="1" height="2" fill="#000000" fill-opacity="0.5"/><rect x="15" y="12" width="1" height="2" fill="#000000" fill-opacity="0.3"/><rect x="17" y="12" width="1" height="2" fill="#000000" fill-opacity="0.42"/><rect x="18" y="12" width="1" height="2" fill="#000000" fill-opacity="0.42"/><rect x="19" y="12" width="1" height="2" fill="#000000" fill-opacity="0.5"/><rect x="20" y="12" width="1" height="2" fill="#000000" fill-opacity="0.42"/><rect x="21" y="12" width="1" height="2" fill="#000000" fill-opacity="0.42"/><rect x="22" y="12" width="1" height="2" fill="#000000" fill-opacity="0.42"/><rect x="23" y="12" width="1" height="2" fill="#000000" fill-opacity="0.62"/><rect x="24" y="12" width="1" height="2" fill="#000000" fill-opacity="0.3"/><rect x="25" y="12" width="1" height="2" fill="#000000" fill-opacity="0.42"/><rect x="26" y="12" width="1" height="2" fill="#000000" fill-opacity="0.42"/><rect x="27" y="12" width="1" height="2" fill="#000000" fill-opacity="0.5"/><rect x="28" y="12" width="1" height="2" fill="#000000" fill-opacity="0.42"/><rect x="29" y="12" width="1" height="2" fill="#000000" fill-opacity="0.3"/><rect x="30" y="12" width="1" height="2" fill="#000000" fill-opacity="0.42"/><rect x="31" y="12" width="1" height="2" fill="#000000" fill-opacity="0.62"/><rect x="32" y="12" width="1" height="2" fill="#000000" fill-opacity="0.42"/><rect x="33" y="12" width="1" height="2" fill="#000000" fill-opacity="0.5"/><rect x="4" y="16" width="1" height="2" fill="#0000ff" fill-opacity="0.42"/><rect x="5" y="16" width="1" height="2" fill="#0000ff" fill-opacity="0.42"/><rect x="6" y="16" width="1" height="2" fill="#0000ff" fill-opacity="0.42"/><rect x="7" y="16" width="1" height="2" fill="#0000ff" fill-opacity="0.42"/><rect x="8" y="16" width="1" height="2" fill="#0000ff" fill-opacity="0.62"/><rect x="10" y="16" width="1" height="2" fill="#000000" fill-opacity="0.42"/><rect x="11" y="16" width="1" height="2" fill="#000000" fill-opacity="0.42"/><rect x="12" y="16" width="1" height="2" fill="#000000" fill-opacity="0.42"/><rect x="13" y="16" width="1" height="2" fill="#000000" fill-opacity="0.62"/><rect x="14" y="16" width="1" height="2" fill="#000000" fill-opacity="0.42"/><rect x="15" y="16" width="1" height="2" fill="#000000" fill-opacity="0.42"/><rect x="16" y="16" width="1" height="2" fill="#000000" fill-opacity="0.62"/><rect x="17" y="16" width="1" height="2" fill="#000000" fill-opacity="0.62"/><rect x="18" y="16" width="1" height="2" fill="#000000" fill-opacity="0.42"/><rect x="19" y="16" width="1" height="2" fill="#000000" fill-opacity="0.42"/><rect x="20" y="16" width="1" height="2" fill="#000000" fill-opacity="0.62"/><rect x="21" y="16" width="1" height="2" fill="#000000" fill-opacity="0.62"/><rect x="22" y="16" width="1" height="2" fill="#000000" fill-opacity="0.42"/><rect x="23" y="16" width="1" height="2" fill="#000000" fill-opacity="0.42"/><rect x="24" y="16" width="1" height="2" fill="#000000" fill-opacity="0.42"/><rect x="25" y="16" width="1" height="2" fill="#000000" fill-opacity="0.42"/><rect x="27" y="16" width="1" height="2" fill="#000000" fill-opacity="0.3"/><rect x="29" y="16" width="1" height="2" fill="#a31515" fill-opacity="0.62"/><rect x="30" y="16" width="1" height="2" fill="#a31515" fill-opacity="0.42"/><rect x="31" y="16" width="1" height="2" fill="#a31515" fill-opacity="0.42"/><rect x="32" y="16" width="1" height="2" fill="#a31515" fill-opacity="0.42"/><rect x="33" y="16" width="1" height="2" fill="#a31515" fill-opacity="0.42"/><rect x="34" y="16" width="1" height="2" fill="#a31515" fill-opacity="0.42"/><rect x="35" y="16" width="1" height="2" fill="#a31515" fill-opacity="0.62"/><rect x="4" y="18" width="1" height="2" fill="#0000ff" fill-opacity="0.42"/><rect x="5" y="18" width="1" height="2" fill="#0000ff" fill-opacity="0.42"/><rect x="6" y="18" width="1" height="2" fill="#0000ff" fill-opacity="0.42"/><rect x="7" y="18" width="1" height="2" fill="#0000ff" fill-opacity="0.42"/><rect x="8" y="18" width="1" height="2" fill="#0000ff" fill-opacity="0.62"/><rect x="10" y="18" width="1" height="2" fill="#000000" fill-opacity="0.5"/><rect x="11" y="18" width="1" height="2" fill="#000000" fill-opacity="0.62"/><rect x="12" y="18" width="1" height="2" fill="#000000" fill-opacity="0.42"/><rect x="13" y="18" width="1" height="2" fill="#000000" fill-opacity="0.5"/><rect x="14" y="18" width="1" height="2" fill="#000000" fill-opacity="0.42"/><rect x="15" y="18" width="1" height="2" fill="#000000" fill-opacity="0.42"/><rect x="16" y="18" width="1" height="2" fill="#000000" fill-opacity="0.62"/><rect x="17" y="18" width="1" height="2" fill="#000000" fill-opacity="0.42"/><rect x="18" y="18" width="1" height="2" fill="#000000" fill-opacity="0.42"/><rect x="19" y="18" width="1" height="2" fill="#000000" fill-opacity="0.62"/><rect x="21" y="18" width="1" height="2" fill="#000000" fill-opacity="0.3"/><rect x="23" y="18" width="1" height="2" fill="#0000ff" fill-opacity="0.42"/><rect x="24" y="18" width="1" height="2" fill="#0000ff" fill-opacity="0.42"/><rect x="25" y="18" width="1" height="2" fill="#0000ff" fill-opacity="0.42"/><rect x="26" y="18" width="1" height="2" fill="#0000ff" fill-opacity="0.42"/><rect x="27" y="18" width="1" height="2" fill="#0000ff" fill-opacity="0.62"/><rect x="29" y="18" width="1" height="2" fill="#000000" fill-opacity="0.42"/><rect x="30" y="18" width="1" height="2" fill="#000000" fill-opacity="0.42"/><rect x="31" y="18" width="1" height="2" fill="#000000" fill-opacity="0.42"/><rect x="32" y="18" width="1" height="2" fill="#000000" fill-opacity="0.62"/><rect x="33" y="18" width="1" height="2" fill="#000000" fill-opacity="0.42"/><rect x="34" y="18" width="1" height="2" fill="#000000" fill-opacity="0.42"/><rect x="35" y="18" width="1" height="2" fill="#000000" fill-opacity="0.62"/><rect x="36" y="18" width="1" height="2" fill="#000000" fill-opacity="0.62"/><rect x="37" y="18" width="1" height="2" fill="#000000" fill-opacity="0.42"/><rect x="38" y="18" width="1" height="2" fill="#000000" fill-opacity="0.42"/><rect x="39" y="18" width="1" height="2" fill="#000000" fill-opacity="0.62"/><rect x="40" y="18" width="1" height="2" fill="#000000" fill-opacity="0.3"/><rect x="41" y="18" width="1" height="2" fill="#000000" fill-opacity="0.5"/><rect x="42" y="18" width="1" height="2" fill="#000000" fill-opacity="0.42"/><rect x="43" y="18" width="1" height="2" fill="#000000" fill-opacity="0.62"/><rect x="44" y="18" width="1" height="2" fill="#000000" fill-opacity="0.62"/><rect x="45" y="18" width="1" height="2" fill="#000000" fill-opacity="0.62"/><rect x="46" y="18" width="1" height="2" fill="#000000" fill-opacity="0.42"/><rect x="47" y="18" width="1" height="2" fill="#000000" fill-opacity="0.5"/><rect x="48" y="18" width="1" height="2" fill="#000000" fill-opacity="0.42"/><rect x="49" y="18" width="1" height="2" fill="#000000" fill-opacity="0.42"/><rect x="50" y="18" width="1" height="2" fill="#000000" fill-opacity="0.62"/><rect x="51" y="18" width="1" height="2" fill="#000000" fill-opacity="0.42"/><rect x="52" y="18" width="1" height="2" fill="#000000" fill-opacity="0.42"/><rect x="53" y="18" width="1" height="2" fill="#000000" fill-opacity="0.62"/><rect x="54" y="18" width="1" height="2" fill="#000000" fill-opacity="0.3"/><rect x="55" y="18" width="1" height="2" fill="#000000" fill-opacity="0.42"/><rect x="56" y="18" width="1" height="2" fill="#000000" fill-opacity="0.42"/><rect x="57" y="18" width="1" height="2" fill="#000000" fill-opacity="0.42"/><rect x="58" y="18" width="1" height="2" fill="#000000" fill-opacity="0.62"/><rect x="59" y="18" width="1" height="2" fill="#000000" fill-opacity="0.42"/><rect x="60" y="18" width="1" height="2" fill="#000000" fill-opacity="0.42"/><rect x="61" y="18" width="1" height="2" fill="#000000" fill-opacity="0.62"/><rect x="62" y="18" width="1" height="2" fill="#000000" fill-opacity="0.62"/><rect x="63" y="18" width="1" height="2" fill="#000000" fill-opacity="0.42"/><rect x="64" y="18" width="1" height="2" fill="#000000" fill-opacity="0.42"/><rect x="65" y="18" width="1" height="2" fill="#000000" fill-opacity="0.62"/><rect x="66" y="18" width="1" height="2" fill="#000000" fill-opacity="0.62"/><rect x="67" y="18" width="1" height="2" fill="#000000" fill-opacity="0.42"/><rect x="68" y="18" width="1" height="2" fill="#000000" fill-opacity="0.42"/><rect x="69" y="18" width="1" height="2" fill="#000000" fill-opacity="0.42"/><rect x="70" y="18" width="1" height="2" fill="#000000" fill-opacity="0.42"/><rect x="71" y="18" width="1" height="2" fill="#000000" fill-opacity="0.3"/><rect x="73" y="18" width="1" height="2" fill="#000000" fill-opacity="0.42"/><rect x="74" y="18" width="1" height="2" fill="#000000" fill-opacity="0.42"/><rect x="75" y="18" width="1" height="2" fill="#000000" fill-opacity="0.42"/><rect x="76" y="18" width="1" height="2" fill="#000000" fill-opacity="0.42"/><rect x="77" y="18" width="1" height="2" fill="#000000" fill-opacity="0.42"/><rect x="78" y="18" width="1" height="2" fill="#000000" fill-opacity="0.42"/><rect x="79" y="18" width="1" height="2" fill="#000000" fill-opacity="0.42"/><rect x="80" y="18" width="1" height="2" fill="#000000" fill-opacity="0.5"/><rect x="81" y="18" width="1" height="2" fill="#000000" fill-opacity="0.62"/><rect x="82" y="18" width="1" height="2" fill="#000000" fill-opacity="0.62"/><rect x="83" y="18" width="1" height="2" fill="#000000" fill-opacity="0.42"/><rect x="84" y="18" width="1" height="2" fill="#000000" fill-opacity="0.5"/><rect x="85" y="18" width="1" height="2" fill="#000000" fill-opacity="0.42"/><rect x="86" y="18" width="1" height="2" fill="#000000" fill-opacity="0.42"/><rect x="87" y="18" width="1" height="2" fill="#000000" fill-opacity="0.62"/><rect x="88" y="18" width="1" height="2" fill="#000000" fill-opacity="0.62"/><rect x="89" y="18" width="1" height="2" fill="#000000" fill-opacity="0.3"/><rect x="4" y="20" width="1" height="2" fill="#0000ff" fill-opacity="0.42"/><rect x="5" y="20" width="1" height="2" fill="#0000ff" fill-opacity="0.42"/><rect x="6" y="20" width="1" height="2" fill="#0000ff" fill-opacity="0.42"/><rect x="7" y="20" width="1" height="2" fill="#0000ff" fill-opacity="0.42"/><rect x="8" y="20" width="1" height="2" fill="#0000ff" fill-opacity="0.62"/><rect x="10" y="20" width="1" height="2" fill="#000000" fill-opacity="0.62"/><rect x="11" y="20" width="1" height="2" fill="#000000" fill-opacity="0.42"/><rect x="12" y="20" width="1" height="2" fill="#000000" fill-opacity="0.5"/><rect x="13" y="20" width="1" height="2" fill="#000000" fill-opacity="0.62"/><rect x="14" y="20" width="1" height="2" fill="#000000" fill-opacity="0.62"/><rect x="15" y="20" width="1" height="2" fill="#000000" fill-opacity="0.42"/><rect x="16" y="20" width="1" height="2" fill="#000000" fill-opacity="0.5"/><rect x="17" y="20" width="1" height="2" fill="#000000" fill-opacity="0.42"/><rect x="18" y="20" width="1" height="2" fill="#000000" fill-opacity="0.42"/><rect x="19" y="20" width="1" height="2" fill="#000000" fill-opacity="0.42"/><rect x="21" y="20" width="1" height="2" fill="#000000" fill-opacity="0.3"/><rect x="23" y="20" width="1" height="2" fill="#0000ff" fill-opacity="0.42"/><rect x="24" y="20" width="1" height="2" fill="#0000ff" fill-opacity="0.42"/><rect x="25" y="20" width="1" height="2" fill="#0000ff" fill-opacity="0.42"/><rect x="26" y="20" width="1" height="2" fill="#0000ff" fill-opacity="0.42"/><rect x="27" y="20" width="1" height="2" fill="#0000ff" fill-opacity="0.62"/><rect x="29" y="20" width="1" height="2" fill="#000000" fill-opacity="0.42"/><rect x="30" y="20" width="1" height="2" fill="#000000" fill-opacity="0.42"/><rect x="31" y="20" width="1" height="2" fill="#000000" fill-opacity="0.42"/><rect x="32" y="20" width="1" height="2" fill="#000000" fill-opacity="0.62"/><rect x="33" y="20" width="1" height="2" fill="#000000" fill-opacity="0.42"/><rect x="34" y="20" width="1" height="2" fill="#000000" fill-opacity="0.42"/><rect x="35" y="20" width="1" height="2" fill="#000000" fill-opacity="0.62"/><rect x="36" y="20" width="1" height="2" fill="#000000" fill-opacity="0.62"/><rect x="37" y="20" width="1" height="2" fill="#000000" fill-opacity="0.42"/><rect x="38" y="20" width="1" height="2" fill="#000000" fill-opacity="0.42"/><rect x="39" y="20" width="1" height="2" fill="#000000" fill-opacity="0.62"/><rect x="40" y="20" width="1" height="2" fill="#000000" fill-opacity="0.3"/><rect x="41" y="20" width="1" height="2" fill="#000000" fill-opacity="0.62"/><rect x="42" y="20" width="1" height="2" fill="#000000" fill-opacity="0.42"/><rect x="43" y="20" width="1" height="2" fill="#000000" fill-opacity="0.42"/><rect x="44" y="20" width="1" height="2" fill="#000000" fill-opacity="0.62"/><rect x="45" y="20" width="1" height="2" fill="#000000" fill-opacity="0.62"/><rect x="46" y="20" width="1" height="2" fill="#000000" fill-opacity="0.42"/><rect x="47" y="20" width="1" height="2" fill="#000000" fill-opacity="0.5"/><rect x="48" y="20" width="1" height="2" fill="#000000" fill-opacity="0.62"/><rect x="49" y="20" width="1" height="2" fill="#000000" fill-opacity="0.42"/><rect x="50" y="20" width="1" height="2" fill="#000000" fill-opacity="0.42"/><rect x="51" y="20" width="1" height="2" fill="#000000" fill-opacity="0.62"/><rect x="52" y="20" width="1" height="2" fill="#000000" fill-opacity="0.62"/><rect x="53" y="20" width="1" height="2" fill="#000000" fill-opacity="0.62"/><rect x="54" y="20" width="1" height="2" fill="#000000" fill-opacity="0.42"/><rect x="55" y="20" width="1" height="2" fill="#000000" fill-opacity="0.5"/><rect x="56" y="20" width="1" height="2" fill="#000000" fill-opacity="0.42"/><rect x="57" y="20" width="1" height="2" fill="#000000" fill-opacity="0.42"/><rect x="58" y="20" width="1" height="2" fill="#000000" fill-opacity="0.42"/><rect x="59" y="20" width="1" height="2" fill="#000000" fill-opacity="0.3"/><rect x="60" y="20" width="1" height="2" fill="#000000" fill-opacity="0.42"/><rect x="61" y="20" width="1" height="2" fill="#000000" fill-opacity="0.42"/><rect x="62" y="20" width="1" height="2" fill="#000000" fill-opacity="0.42"/><rect x="63" y="20" width="1" height="2" fill="#000000" fill-opacity="0.62"/><rect x="64" y="20" width="1" height="2" fill="#000000" fill-opacity="0.42"/><rect x="65" y="20" width="1" height="2" fill="#000000" fill-opacity="0.42"/><rect x="66" y="20" width="1" height="2" fill="#000000" fill-opacity="0.62"/><rect x="67" y="20" width="1" height="2" fill="#000000" fill-opacity="0.62"/><rect x="68" y="20" width="1" height="2" fill="#000000" fill-opacity="0.42"/><rect x="69" y="20" width="1" height="2" fill="#000000" fill-opacity="0.42"/><rect x="70" y="20" width="1" height="2" fill="#000000" fill-opacity="0.62"/><rect x="71" y="20" width="1" height="2" fill="#000000" fill-opacity="0.62"/><rect x="72" y="20" width="1" height="2" fill="#000000" fill-opacity="0.42"/><rect x="73" y="20" width="1" height="2" fill="#000000" fill-opacity="0.42"/><rect x="74" y="20" width="1" height="2" fill="#000000" fill-opacity="0.42"/><rect x="75" y="20" width="1" height="2" fill="#000000" fill-opacity="0.42"/><rect x="76" y="20" width="1" height="2" fill="#000000" fill-opacity="0.3"/><rect x="78" y="20" width="1" height="2" fill="#000000" fill-opacity="0.62"/><rect x="79" y="20" width="1" height="2" fill="#000000" fill-opacity="0.42"/><rect x="80" y="20" width="1" height="2" fill="#000000" fill-opacity="0.42"/><rect x="81" y="20" width="1" height="2" fill="#000000" fill-opacity="0.42"/><rect x="82" y="20" width="1" height="2" fill="#000000" fill-opacity="0.62"/><rect x="83" y="20" width="1" height="2" fill="#000000" fill-opacity="0.3"/><rect x="85" y="20" width="1" height="2" fill="#000000" fill-opacity="0.42"/><rect x="86" y="20" width="1" height="2" fill="#000000" fill-opacity="0.62"/><rect x="87" y="20" width="1" height="2" fill="#000000" fill-opacity="0.42"/><rect x="88" y="20" width="1" height="2" fill="#000000" fill-opacity="0.5"/><rect x="89" y="20" width="1" height="2" fill="#000000" fill-opacity="0.3"/><rect x="91" y="20" width="1" height="2" fill="#000000" fill-opacity="0.3"/><rect x="92" y="20" width="1" height="2" fill="#098658" fill-opacity="0.62"/><rect x="93" y="20" width="1" height="2" fill="#000000" fill-opacity="0.3"/><rect x="4" y="24" width="1" height="2" fill="#0000ff" fill-opacity="0.42"/><rect x="5" y="24" width="1" height="2" fill="#0000ff" fill-opacity="0.42"/><rect x="6" y="24" width="1" height="2" fill="#0000ff" fill-opacity="0.42"/><rect x="7" y="24" width="1" height="2" fill="#0000ff" fill-opacity="0.42"/><rect x="8" y="24" width="1" height="2" fill="#0000ff" fill-opacity="0.62"/><rect x="10" y="24" width="1" height="2" fill="#000000" fill-opacity="0.62"/><rect x="11" y="24" width="1" height="2" fill="#000000" fill-opacity="0.42"/><rect x="12" y="24" width="1" height="2" fill="#000000" fill-opacity="0.62"/><rect x="13" y="24" width="1" height="2" fill="#000000" fill-opacity="0.42"/><rect x="15" y="24" width="1" height="2" fill="#000000" fill-opacity="0.3"/><rect x="17" y="24" width="1" height="2" fill="#000000" fill-opacity="0.3"/><rect x="6" y="26" width="1" height="2" fill="#000000" fill-opacity="0.5"/><rect x="7" y="26" width="1" height="2" fill="#000000" fill-opacity="0.62"/><rect x="8" y="26" width="1" height="2" fill="#000000" fill-opacity="0.42"/><rect x="9" y="26" width="1" height="2" fill="#000000" fill-opacity="0.5"/><rect x="10" y="26" width="1" height="2" fill="#000000" fill-opacity="0.42"/><rect x="11" y="26" width="1" height="2" fill="#000000" fill-opacity="0.42"/><rect x="12" y="26" width="1" height="2" fill="#000000" fill-opacity="0.62"/><rect x="13" y="26" width="1" height="2" fill="#000000" fill-opacity="0.42"/><rect x="14" y="26" width="1" height="2" fill="#000000" fill-opacity="0.42"/><rect x="15" y="26" width="1" height="2" fill="#000000" fill-opacity="0.62"/><rect x="16" y="26" width="1" height="2" fill="#000000" fill-opacity="0.3"/><rect x="6" y="28" width="1" height="2" fill="#000000" fill-opacity="0.62"/><rect x="7" y="28" width="1" height="2" fill="#000000" fill-opacity="0.42"/><rect x="8" y="28" width="1" height="2" fill="#000000" fill-opacity="0.5"/><rect x="9" y="28" width="1" height="2" fill="#000000" fill-opacity="0.62"/><rect x="10" y="28" width="1" height="2" fill="#000000" fill-opacity="0.62"/><rect x="11" y="28" width="1" height="2" fill="#000000" fill-opacity="0.42"/><rect x="12" y="28" width="1" height="2" fill="#000000" fill-opacity="0.5"/><rect x="13" y="28" width="1" height="2" fill="#000000" fill-opacity="0.42"/><rect x="14" y="28" width="1" height="2" fill="#000000" fill-opacity="0.42"/><rect x="15" y="28" width="1" height="2" fill="#000000" fill-opacity="0.42"/><rect x="4" y="30" width="1" height="2" fill="#000000" fill-opacity="0.3"/><rect x="4" y="34" width="1" height="2" fill="#000000" fill-opacity="0.42"/><rect x="5" y="34" width="1" height="2" fill="#000000" fill-opacity="0.42"/><rect x="6" y="34" width="1" height="2" fill="#000000" fill-opacity="0.42"/><rect x="7" y="34" width="1" height="2" fill="#000000" fill-opacity="0.5"/><rect x="8" y="34" width="1" height="2" fill="#000000" fill-opacity="0.42"/><rect x="9" y="34" width="1" height="2" fill="#000000" fill-opacity="0.42"/><rect x="10" y="34" width="1" height="2" fill="#000000" fill-opacity="0.42"/><rect x="11" y="34" width="1" height="2" fill="#000000" fill-opacity="0.42"/><rect x="12" y="34" width="1" height="2" fill="#000000" fill-opacity="0.3"/><rect x="13" y="34" width="1" height="2" fill="#000000" fill-opacity="0.42"/><rect x="14" y="34" width="1" height="2" fill="#000000" fill-opacity="0.42"/><rect x="15" y="34" width="1" height="2" fill="#000000" fill-opacity="0.42"/><rect x="16" y="34" width="1" height="2" fill="#000000" fill-opacity="0.62"/><rect x="17" y="34" width="1" height="2" fill="#000000" fill-opacity="0.3"/><rect x="18" y="34" width="1" height="2" fill="#000000" fill-opacity="0.62"/><rect x="19" y="34" width="1" height="2" fill="#000000" fill-opacity="0.42"/><rect x="20" y="34" width="1" height="2" fill="#000000" fill-opacity="0.62"/><rect x="21" y="34" width="1" height="2" fill="#000000" fill-opacity="0.42"/><rect x="22" y="34" width="1" height="2" fill="#000000" fill-opacity="0.3"/><rect x="2" y="36" width="1" height="2" fill="#000000" fill-opacity="0.3"/><rect x="4" y="36" width="1" height="2" fill="#0000ff" fill-opacity="0.42"/><rect x="5" y="36" width="1" height="2" fill="#0000ff" fill-opacity="0.42"/><rect x="6" y="36" width="1" height="2" fill="#0000ff" fill-opacity="0.62"/><rect x="7" y="36" width="1" height="2" fill="#0000ff" fill-opacity="0.42"/><rect x="8" y="36" width="1" height="2" fill="#0000ff" fill-opacity="0.62"/><rect x="10" y="36" width="1" height="2" fill="#000000" fill-opacity="0.3"/><rect x="11" y="36" width="1" height="2" fill="#000000" fill-opacity="0.42"/><rect x="12" y="36" width="1" height="2" fill="#000000" fill-opacity="0.42"/><rect x="13" y="36" width="1" height="2" fill="#000000" fill-opacity="0.42"/><rect x="14" y="36" width="1" height="2" fill="#000000" fill-opacity="0.42"/><rect x="15" y="36" width="1" height="2" fill="#000000" fill-opacity="0.42"/><rect x="16" y="36" width="1" height="2" fill="#000000" fill-opacity="0.3"/><rect x="18" y="36" width="1" height="2" fill="#000000" fill-opacity="0.3"/><rect x="4" y="38" width="1" height="2" fill="#000000" fill-opacity="0.42"/><rect x="5" y="38" width="1" height="2" fill="#000000" fill-opacity="0.42"/><rect x="6" y="38" width="1" height="2" fill="#000000" fill-opacity="0.42"/><rect x="7" y="38" width="1" height="2" fill="#000000" fill-opacity="0.5"/><rect x="8" y="38" width="1" height="2" fill="#000000" fill-opacity="0.42"/><rect x="9" y="38" width="1" height="2" fill="#000000" fill-opacity="0.42"/><rect x="10" y="38" width="1" height="2" fill="#000000" fill-opacity="0.42"/><rect x="11" y="38" width="1" height="2" fill="#000000" fill-opacity="0.42"/><rect x="12" y="38" width="1" height="2" fill="#000000" fill-opacity="0.3"/><rect x="13" y="38" width="1" height="2" fill="#000000" fill-opacity="0.42"/><rect x="14" y="38" width="1" height="2" fill="#000000" fill-opacity="0.42"/><rect x="15" y="38" width="1" height="2" fill="#000000" fill-opacity="0.42"/><rect x="16" y="38" width="1" height="2" fill="#000000" fill-opacity="0.62"/><rect x="17" y="38" width="1" height="2" fill="#000000" fill-opacity="0.62"/><rect x="18" y="38" width="1" height="2" fill="#000000" fill-opacity="0.42"/><rect x="19" y="38" width="1" height="2" fill="#000000" fill-opacity="0.42"/><rect x="20" y="38" width="1" height="2" fill="#000000" fill-opacity="0.42"/><rect x="21" y="38" width="1" height="2" fill="#000000" fill-opacity="0.42"/><rect x="22" y="38" width="1" height="2" fill="#000000" fill-opacity="0.3"/><rect x="23" y="38" width="1" height="2" fill="#000000" fill-opacity="0.42"/><rect x="24" y="38" width="1" height="2" fill="#000000" fill-opacity="0.42"/><rect x="25" y="38" width="1" height="2" fill="#000000" fill-opacity="0.42"/><rect x="26" y="38" width="1" height="2" fill="#000000" fill-opacity="0.42"/><rect x="27" y="38" width="1" height="2" fill="#000000" fill-opacity="0.42"/><rect x="28" y="38" width="1" height="2" fill="#000000" fill-opacity="0.3"/><rect x="2" y="40" width="1" height="2" fill="#000000" fill-opacity="0.3"/><rect x="0" y="42" width="1" height="2" fill="#000000" fill-opacity="0.3"/></svg>
    <div class="abs" style="left:955px;top:2px;width:1px;height:727px;background:#d8d8d8"></div>
    <div class="abs" style="left:969px;top:0;width:2px;height:729px;background:#d4d4d4"></div>
   </div>
  </div>
 </div>
</div></div>
</body></html>
